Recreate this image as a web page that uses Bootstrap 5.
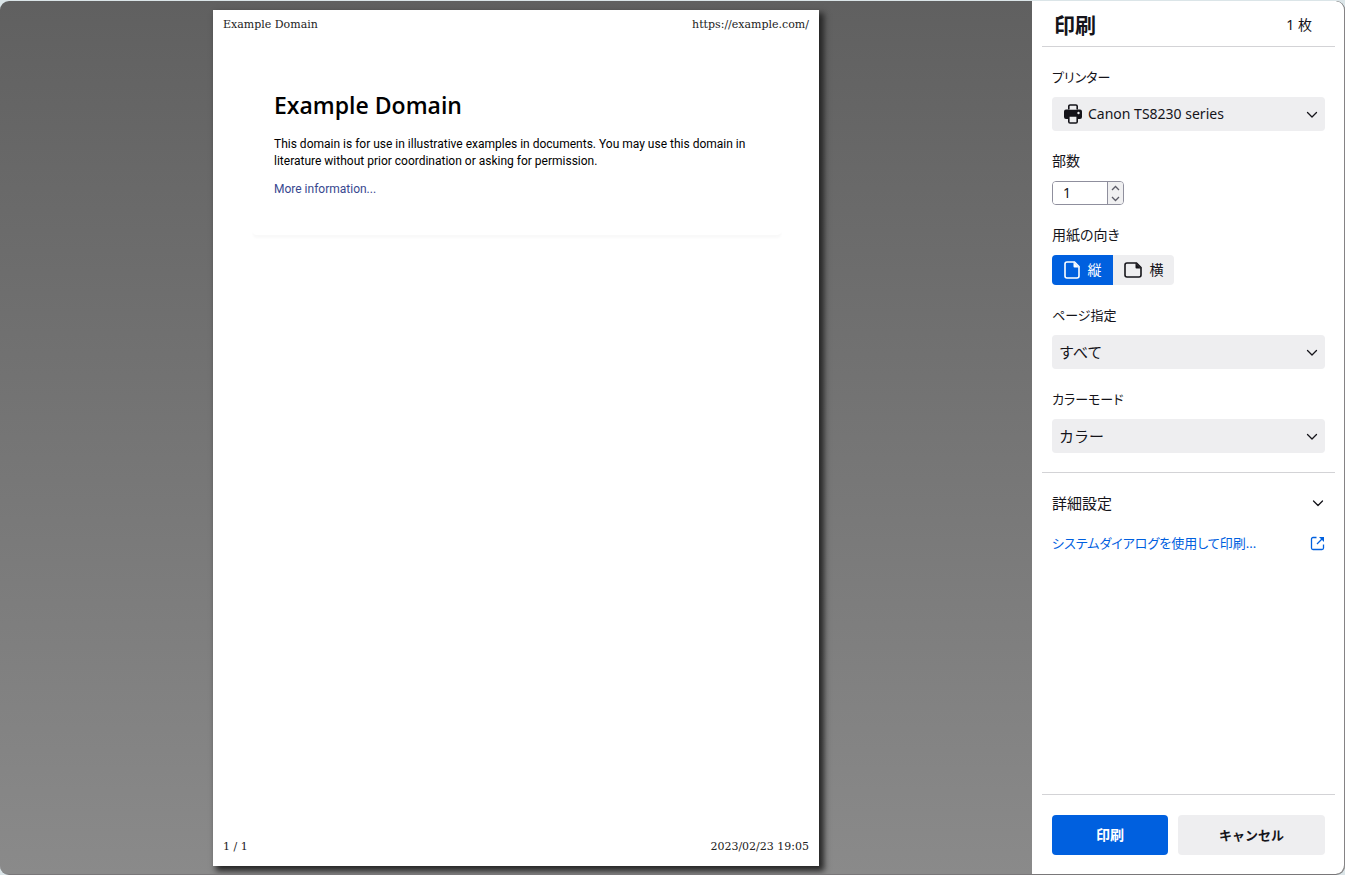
<!DOCTYPE html>
<html lang="ja">
<head>
<meta charset="utf-8">
<meta name="viewport" content="width=device-width, initial-scale=1">
<title>印刷</title>
<link href="https://cdn.jsdelivr.net/npm/bootstrap@5.3.0/dist/css/bootstrap.min.css" rel="stylesheet">
<style>
:root{--ink:#15141a;--accent:#0060df;--field:#eeeef0;--rule:#d3d3d6}
body{background:#dbe5e8;color:var(--ink);font-family:"Noto Sans","Noto Sans CJK JP",sans-serif;font-size:15px;line-height:20px;font-feature-settings:"palt"}
.print-window{height:100vh;min-height:640px;padding-top:1px}
.print-shell{background:linear-gradient(#606060,#8a8a8a);border-radius:9px;overflow:hidden;border-bottom:1px solid #797779}
.preview{min-width:0;padding:9px 0 8px}
.sheet{aspect-ratio:606/856;height:100%;background:#fff;box-shadow:4px 4px 6px 1px #262626;padding:7px 10px 11px;color:#000}
.sheet-line{font-family:"DejaVu Serif",serif;font-size:11px;line-height:16px;color:#222}
.sheet-body{margin:17px 27px 0 29px;padding:41px 22px 37px;border-radius:5px;box-shadow:0 4px 3px -1px #f9f9f9;font-family:Roboto,sans-serif;font-size:12px;line-height:17px}
.sheet-body h1{font-family:"Open Sans",sans-serif;font-size:23px;line-height:28px;font-weight:600;margin-bottom:17px}
.sheet-body p{margin-bottom:11px}
.sheet-body a{color:#38488f}
.settings{width:313px;background:#fff;border-right:1px solid #858385;border-radius:0 9px 9px 0}
.settings-head{height:46px;margin:0 9px 0 10px;padding:2px 23px 0 12px;border-bottom:1px solid var(--rule)}
.settings-head h2{font-size:21px;line-height:28px}
.sheet-count{font-size:14px}
.settings-main{padding:20px 19px 20px 20px;gap:20px}
.settings-main label,.settings-main legend{font-size:14px;line-height:20px;margin-bottom:10px}
.settings-main .kana-label{font-size:13px}
.settings .form-select{height:34px;border:0;border-radius:4px;padding:0 32px 0 7px;font-size:15px;line-height:20px;color:var(--ink);background-color:var(--field);background-size:12px;background-position:right 7px center;background-image:url("data:image/svg+xml,%3Csvg xmlns='http://www.w3.org/2000/svg' viewBox='0 0 12 12'%3E%3Cpath d='M1.500 4.500L6 9l4.500-4.500' fill='none' stroke='%2315141a' stroke-width='1.300' stroke-linecap='round' stroke-linejoin='round'/%3E%3C/svg%3E")}
.settings .printer-select{padding-left:36px;font-size:14px}
.printer-icon{left:11px;top:7px;pointer-events:none}
.copies{width:72px;height:24px;border:1px solid #8f8f9d;border-radius:4px;overflow:hidden}
.copies input{min-width:0;flex:1;border:0;padding:0 0 0 10px;font-size:14px;color:var(--ink);appearance:textfield;outline:0}
.copies input::-webkit-inner-spin-button{appearance:none}
.stepper{width:16px;background:#f0f0f1;border-left:1px solid #8f8f9d}
.stepper button{height:11px;border:0;padding:0;background:none;line-height:0}
.settings .orient .btn{width:61px;height:30px;padding:0;border:0;margin-bottom:0;background:var(--field);color:var(--ink);border-radius:4px 0 0 4px}
.settings .orient .btn:last-child{margin-left:0;border-radius:0 4px 4px 0}
.settings .orient .btn-check:checked+.btn{background:var(--accent);color:#fff}
.settings-rule{height:1px;background:var(--rule);margin:-1px 9px 0 10px}
.more-btn{border:0;background:none;padding:0;color:var(--ink)}
.system-link{color:var(--accent);font-size:13px}
.settings-foot{margin:0 9px 0 10px;padding:20px 10px 19px;border-top:1px solid var(--rule);display:grid;grid-template-columns:15fr 19fr;gap:10px}
.settings-foot .btn{height:40px;border:0;border-radius:4px;font-size:13px;font-weight:700;line-height:20px;padding:0;background:var(--field);color:var(--ink)}
.settings-foot .btn-go{background:var(--accent);color:#fff;font-size:14px}
</style>
</head>
<body>
<div class="print-window d-flex">
<div class="print-shell d-flex flex-grow-1">
  <main class="preview flex-grow-1 d-flex justify-content-center">
    <article class="sheet d-flex flex-column">
      <header class="sheet-line d-flex justify-content-between"><span>Example Domain</span><span>https://example.com/</span></header>
      <section class="sheet-body mb-auto">
        <h1>Example Domain</h1>
        <p>This domain is for use in illustrative examples in documents. You may use this domain in literature without prior coordination or asking for permission.</p>
        <a class="text-decoration-none" href="#">More information...</a>
      </section>
      <footer class="sheet-line d-flex justify-content-between"><span>1 / 1</span><span>2023/02/23 19:05</span></footer>
    </article>
  </main>
  <form class="settings flex-shrink-0 d-flex flex-column">
    <header class="settings-head d-flex align-items-center justify-content-between">
      <h2 class="fw-bold mb-0">印刷</h2><span class="sheet-count">1 枚</span>
    </header>
    <div class="settings-main d-flex flex-column">
      <div>
        <label class="kana-label d-block" for="printer">プリンター</label>
        <div class="position-relative">
          <svg class="printer-icon position-absolute" width="20" height="20" viewBox="0 0 20 20" aria-hidden="true"><path d="M3 5.500h14a2 2 0 0 1 2 2v5.500a2 2 0 0 1-2 2H3a2 2 0 0 1-2-2V7.500a2 2 0 0 1 2-2z" fill="#15141a"/><path d="M5.800 5.500V2.300a1.300 1.300 0 0 1 1.300-1.300h5.800a1.300 1.300 0 0 1 1.300 1.300v3.200M5.800 12v5.700a1.300 1.300 0 0 0 1.300 1.300h5.800a1.300 1.300 0 0 0 1.300-1.300V12z" fill="#eeeef0" stroke="#15141a" stroke-width="1.600"/><circle cx="15.500" cy="9" r="1.200" fill="#eeeef0"/></svg>
          <select id="printer" class="form-select printer-select"><option>Canon TS8230 series</option></select>
        </div>
      </div>
      <div>
        <label class="d-block" for="copies">部数</label>
        <div class="copies d-flex">
          <input id="copies" type="number" value="1" min="1">
          <div class="stepper d-flex flex-column">
            <button type="button" aria-label="増やす"><svg width="9" height="6" viewBox="0 0 9 6"><path d="M1 5l3.500-3.500L8 5" fill="none" stroke="#5b5b66" stroke-width="1.300"/></svg></button>
            <button type="button" aria-label="減らす"><svg width="9" height="6" viewBox="0 0 9 6"><path d="M1 1l3.500 3.500L8 1" fill="none" stroke="#5b5b66" stroke-width="1.300"/></svg></button>
          </div>
        </div>
      </div>
      <fieldset>
        <legend>用紙の向き</legend>
        <div class="orient btn-group d-flex" role="group">
          <input class="btn-check" type="radio" name="orient" id="portrait" checked>
          <label class="btn flex-grow-0 d-flex align-items-center justify-content-center gap-2" for="portrait"><svg width="16" height="18" viewBox="0 0 16 18"><path d="M3 1h7.500L15 5.500V15a2 2 0 0 1-2 2H3a2 2 0 0 1-2-2V3a2 2 0 0 1 2-2z" fill="none" stroke="currentColor" stroke-width="1.600"/><path d="M9.500 1v4.500a1 1 0 0 0 1 1H15z" fill="currentColor"/></svg>縦</label>
          <input class="btn-check" type="radio" name="orient" id="landscape">
          <label class="btn flex-grow-0 d-flex align-items-center justify-content-center gap-2" for="landscape"><svg width="18" height="16" viewBox="0 0 18 16"><path d="M3 1h9.500L17 5.500V13a2 2 0 0 1-2 2H3a2 2 0 0 1-2-2V3a2 2 0 0 1 2-2z" fill="none" stroke="currentColor" stroke-width="1.600"/><path d="M11.500 1v4.500a1 1 0 0 0 1 1H17z" fill="currentColor"/></svg>横</label>
        </div>
      </fieldset>
      <div>
        <label class="kana-label d-block" for="range">ページ指定</label>
        <select id="range" class="form-select"><option>すべて</option></select>
      </div>
      <div>
        <label class="kana-label d-block" for="color">カラーモード</label>
        <select id="color" class="form-select"><option>カラー</option></select>
      </div>
    </div>
    <div class="settings-rule"></div>
    <div class="settings-main d-flex flex-column mb-auto">
      <button type="button" class="more-btn d-flex align-items-center justify-content-between">詳細設定
        <svg width="14" height="12" viewBox="0 0 14 12"><path d="M2.500 4L7 8.500 11.500 4" fill="none" stroke="#15141a" stroke-width="1.300" stroke-linecap="round" stroke-linejoin="round"/></svg></button>
      <a href="#" class="system-link text-decoration-none d-flex align-items-center justify-content-between">システムダイアログを使用して印刷...
        <svg width="15" height="15" viewBox="0 0 15 15" fill="none" stroke="currentColor" stroke-width="1.300"><path d="M6.500 1.500H3A1.500 1.500 0 0 0 1.500 3v9A1.500 1.500 0 0 0 3 13.500h9a1.500 1.500 0 0 0 1.500-1.500V8.500M7 8l5.500-5.500"/><path d="M9 1h5v5z" fill="currentColor" stroke="none"/></svg></a>
    </div>
    <footer class="settings-foot">
      <button type="submit" class="btn btn-go">印刷</button>
      <button type="button" class="btn">キャンセル</button>
    </footer>
  </form>
</div>
</div>
<script src="https://cdn.jsdelivr.net/npm/bootstrap@5.3.0/dist/js/bootstrap.bundle.min.js"></script>
</body>
</html>
